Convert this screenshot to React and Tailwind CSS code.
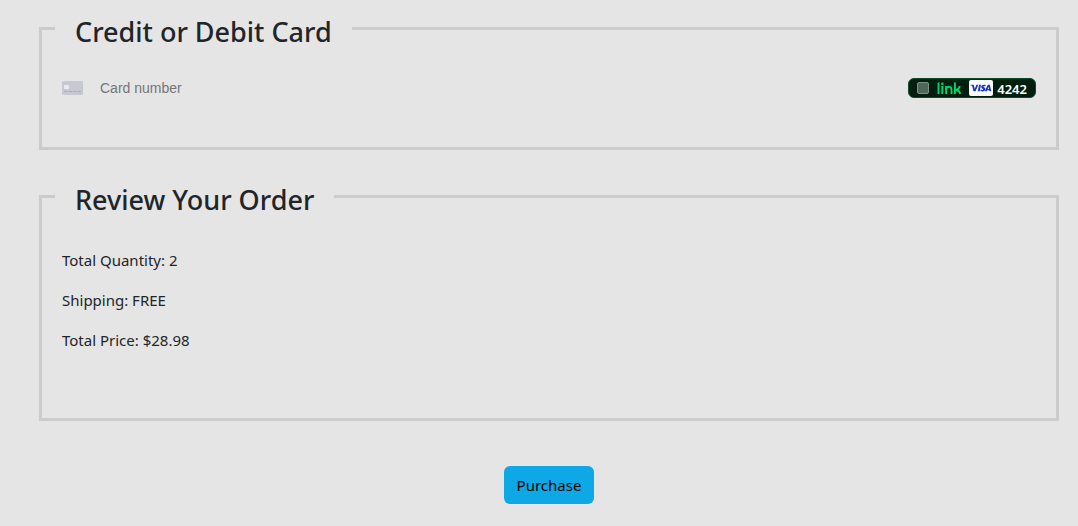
function Panel({ title, children }) {
  return (
    <fieldset className="min-w-0 border-3 border-[#cbcbcb] px-5 pb-[49px]">
      <legend className="-ml-[7px] px-5 pt-1.5 text-[27px] leading-[33px] font-medium text-[#212529]">{title}</legend>
      {children}
    </fieldset>
  );
}

function CardIcon() {
  return (
    <svg aria-hidden="true" viewBox="0 0 21 14" className="h-[14px] w-[21px] shrink-0">
      <rect width="21" height="14" rx="1.5" fill="#c6c9d2" />
      <rect x="2" y="4" width="5" height="4" rx="0.8" fill="#e9eaed" />
      <path d="M2 10.500h3.600M6.500 10.500h3.600M11 10.500h3.600M15.500 10.500h3.600" stroke="#a7adba" strokeWidth="1.200" />
    </svg>
  );
}

function LinkLogo() {
  return (
    <svg role="img" aria-label="link" viewBox="0 0 24 13" className="ml-2 h-[13px] w-6" fill="none" stroke="#00d66f" strokeWidth="1.9">
      <path d="M1.5 0.5V12M5.3 4V12M9.1 12V4M9.1 8c0-2.2 1-3.100 2.800-3.100s2.600 1 2.600 2.900V12M17.900 0.500V12M22.800 4c-.6 2.400-2.400 4-4.600 4 2.500 0 4.300 1.400 5.100 4" />
      <circle cx="5.3" cy="1.7" r="1.3" fill="#00d66f" stroke="none" />
    </svg>
  );
}

function VisaLogo() {
  return (
    <svg role="img" aria-label="Visa" viewBox="0 0 24 16" className="ml-2 h-4 w-6">
      <rect width="24" height="16" rx="2" fill="#fff" />
      <g fill="#1434cb">
        <path d="M1.500 4.800h2.700c.4 0 .7.2.8.700L5.700 9l1.700-4.200h2L6.500 11.300h-2L3.200 6.300c-.1-.4-.3-.6-.6-.7-.4-.2-.8-.3-1.200-.4Z" />
        <path d="M10.100 4.800H12l-1.300 6.500H8.800Z" />
        <path d="M16.700 5l-.3 1.500c-1-.5-2.100-.4-2.100.1 0 .7 2.100.9 2.100 2.500 0 1.500-1.300 2.400-3 2.400-.8 0-1.500-.2-2-.4l.3-1.500c1.100.6 2.500.5 2.500-.2 0-.7-2-.9-2-2.500 0-1.300 1.200-2.200 2.800-2.200.7 0 1.300.1 1.700.3Z" />
        <path fillRule="evenodd" d="M19.200 4.800h1.600l1.500 6.500h-1.800l-.2-1h-2.200l-.4 1h-1.900l2.700-6c.1-.3.4-.5.7-.5Zm.4 1.900-.9 2.300H20Z" />
      </g>
    </svg>
  );
}

export default function App() {
  return (
    <main className="min-h-screen bg-[#e5e5e5] pt-[9px] pr-[19px] pb-5 pl-[39px] font-['Noto_Sans','Open_Sans',sans-serif] text-[#212529]">
      <form className="flex flex-col" onSubmit={(e) => e.preventDefault()}>
        <Panel title="Credit or Debit Card">
          <div className="mt-[30px] flex h-5 items-center">
            <CardIcon />
            <input
              aria-label="Card number"
              placeholder="Card number"
              className="ml-[17px] min-w-0 flex-1 bg-transparent font-['Liberation_Sans',sans-serif] text-sm leading-5 outline-none placeholder:text-[#757575]"
            />
            <label className="flex h-5 shrink-0 items-center rounded-md border border-[#004d2b] bg-[#011e0f] px-2">
              <input
                type="checkbox"
                aria-label="Pay with link, Visa 4242"
                className="size-3 appearance-none rounded-xs border border-[#80917f] bg-[#50665a] checked:bg-[#00d66f]"
              />
              <LinkLogo />
              <VisaLogo />
              <span className="ml-1 pt-0.5 text-[13px] leading-4 font-semibold text-white">4242</span>
            </label>
          </div>
        </Panel>
        <div className="mt-[27px]">
          <Panel title="Review Your Order">
            <div className="mt-8 mb-[17px] flex flex-col gap-4 text-[15px] leading-6">
              <p>Total Quantity: 2</p>
              <p>Shipping: FREE</p>
              <p>Total Price: $28.98</p>
            </div>
          </Panel>
        </div>
        <button type="submit" className="mt-[45px] self-center rounded-md bg-[#0fa8e6] px-[13px] py-[7px] text-[15px] leading-6 text-black">
          Purchase
        </button>
      </form>
    </main>
  );
}
